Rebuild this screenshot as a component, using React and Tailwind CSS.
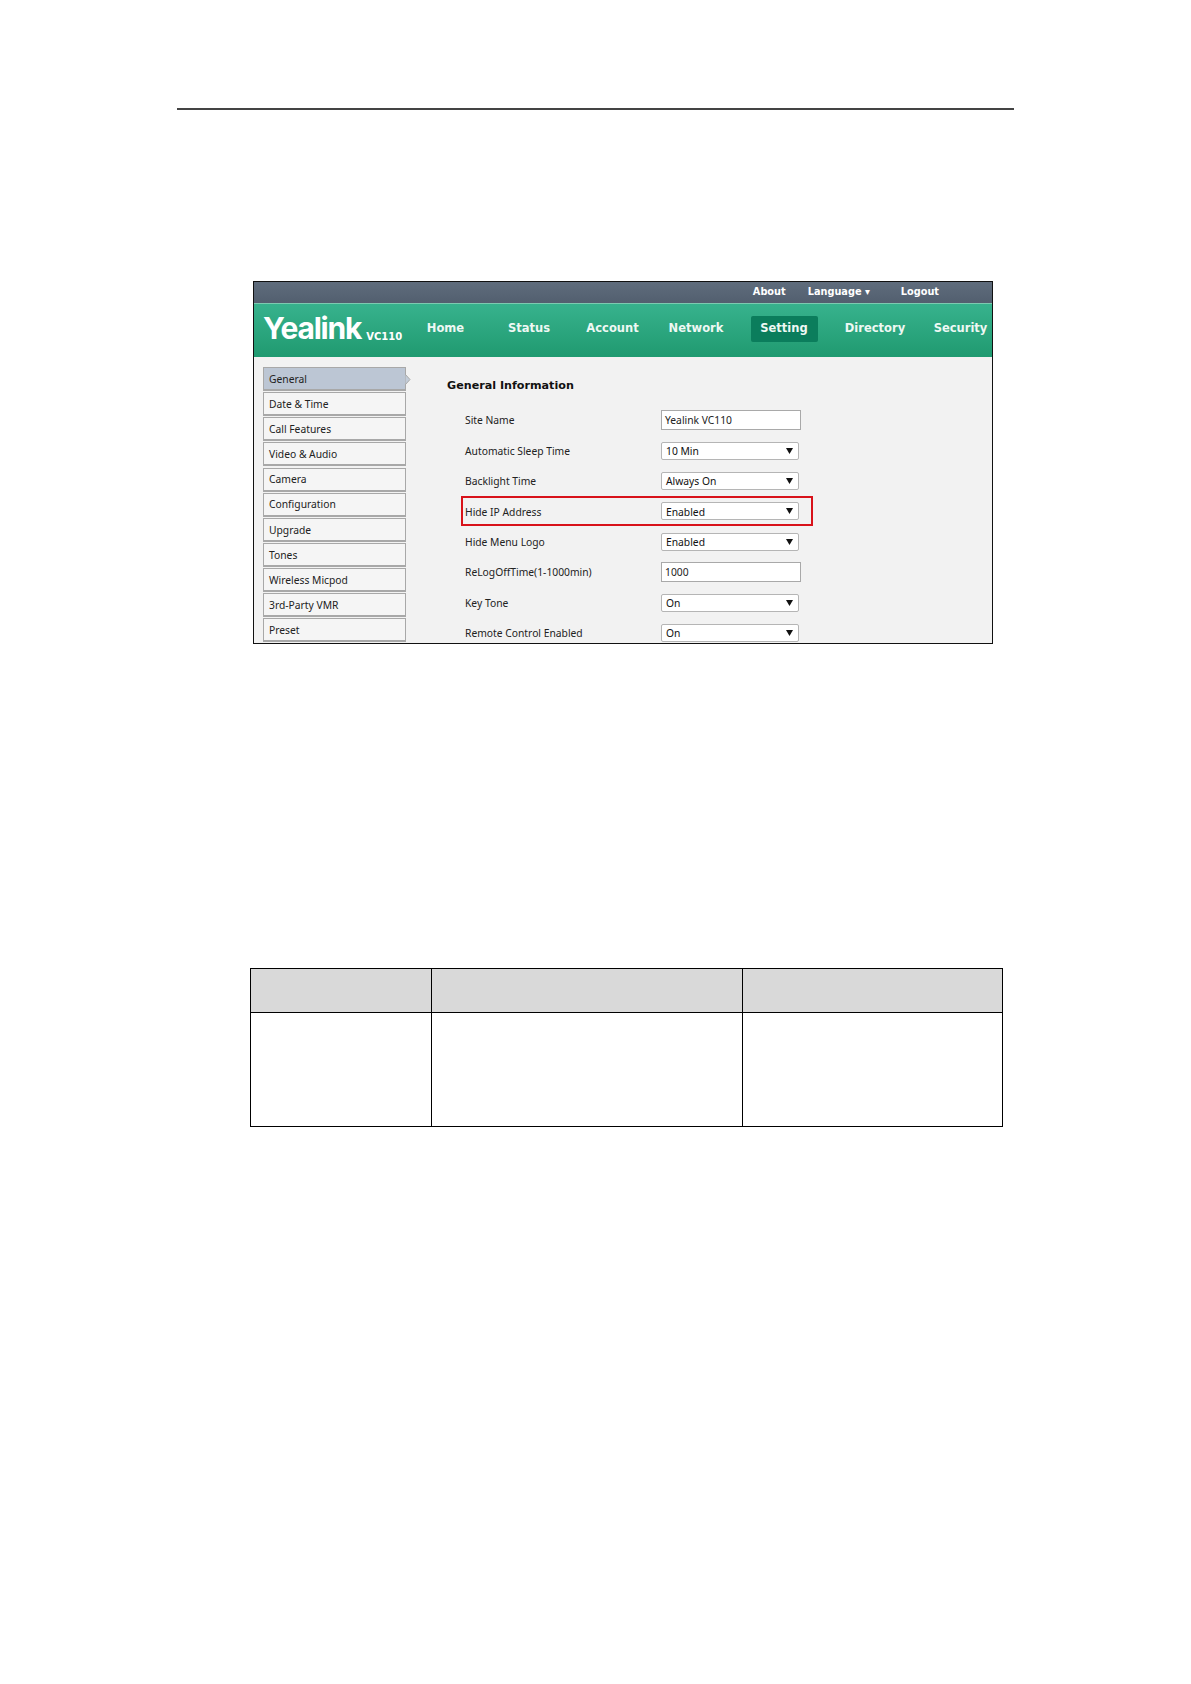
import React from 'react';

const menu = ['General', 'Date & Time', 'Call Features', 'Video & Audio', 'Camera', 'Configuration', 'Upgrade', 'Tones', 'Wireless Micpod', '3rd-Party VMR', 'Preset'];

const rows = [
  { label: 'Site Name', value: 'Yealink VC110', type: 'input' },
  { label: 'Automatic Sleep Time', value: '10 Min', type: 'select' },
  { label: 'Backlight Time', value: 'Always On', type: 'select' },
  { label: 'Hide IP Address', value: 'Enabled', type: 'select', marked: true },
  { label: 'Hide Menu Logo', value: 'Enabled', type: 'select' },
  { label: 'ReLogOffTime(1-1000min)', value: '1000', type: 'input' },
  { label: 'Key Tone', value: 'On', type: 'select' },
  { label: 'Remote Control Enabled', value: 'On', type: 'select' },
];

function NavItem({ width, active, children }) {
  return (
    <div className={`${width} flex justify-center items-center`}>
      <span className={active ? 'w-[67px] h-[26px] flex items-center justify-center rounded-[2px] bg-[#0b7d5c]' : ''}>{children}</span>
    </div>
  );
}

function Field({ row }) {
  if (row.type === 'input') {
    return (
      <div className="w-[140px] h-[20px] bg-white border border-[#a9a9a9] pl-[3px] pt-[2px] flex items-center text-[#222]">{row.value}</div>
    );
  }
  return (
    <div className="w-[138px] h-[18px] bg-white border border-[#b5b5b5] rounded-[2px] pl-[4px] pr-[5px] flex items-center justify-between text-[#111]">
      <span className="pt-[2px]">{row.value}</span>
      <svg width="7" height="6" viewBox="0 0 7 6"><path d="M0 0h7L3.5 6z" fill="#111" /></svg>
    </div>
  );
}

export default function App() {
  return (
    <div className="w-[1191px] h-[1684px] bg-white pt-[108px] font-['DejaVu_Sans',sans-serif]">
      <div className="ml-[177px] w-[837px] h-[2px] bg-[#444]" />

      <div className="ml-[253px] mt-[171px] w-[740px] h-[363px] border border-[#111] flex flex-col overflow-hidden">
        <div className="h-[21px] shrink-0 bg-gradient-to-b from-[#5f6c7c] to-[#525f6f] flex justify-end items-center pr-[53px] text-[9.75px] font-bold text-white">
          <span className="mr-[22px]">About</span>
          <span className="mr-[31px]">Language ▾</span>
          <span>Logout</span>
        </div>
        <div className="h-[54px] shrink-0 pb-[4px] bg-gradient-to-b from-[#37b28d] to-[#1f9a70] border-t border-[#7ccab0] flex items-center text-[11.5px] font-bold text-[#eef8f4]">
          <div className="w-[150px] pl-[9px] flex items-baseline text-white">
            <span className="font-['Inter',sans-serif] font-bold text-[30px] leading-none tracking-[-1.2px] -translate-y-[1px]">Yealink</span>
            <span className="ml-[5px] text-[10px] font-bold">VC110</span>
          </div>
          <NavItem width="w-[83px]">Home</NavItem>
          <NavItem width="w-[84px]">Status</NavItem>
          <NavItem width="w-[83px]">Account</NavItem>
          <NavItem width="w-[84px]">Network</NavItem>
          <NavItem width="w-[92px]" active>Setting</NavItem>
          <NavItem width="w-[90px]">Directory</NavItem>
          <NavItem width="w-[72px] pl-[9px]">Security</NavItem>
        </div>
        <div className="flex-1 bg-[#f2f2f2] flex min-h-0 text-[10.3px] text-[#222] font-['Noto_Sans',sans-serif]">
          <div className="w-[153px] shrink-0 pl-[9px] pt-[10px]">
            {menu.map((item, i) => (
              <div
                key={item}
                className={`relative w-[143px] h-[24px] mb-[1.15px] pl-[5px] pt-[2px] flex items-center border border-[#a8a8a8] border-b-2 ${i === 0 ? 'bg-[#bcc6d4]' : 'bg-[#f5f5f5]'}`}
              >
                {item}
                {i === 0 && (
                  <svg className="absolute -right-[6px] top-[6px]" width="6" height="11" viewBox="0 0 6 11">
                    <path d="M0 0l5 5.5L0 11z" fill="#c3ccd8" stroke="#a8a8a8" />
                  </svg>
                )}
              </div>
            ))}
          </div>
          <div className="flex-1 pl-[40px]">
            <div className="h-[48px] pt-[20px] text-[11.15px] font-bold text-[#111] leading-[18px] font-['DejaVu_Sans',sans-serif]">General Information</div>
            {rows.map((row) => (
              <div key={row.label} className="relative h-[30.4px] flex items-center pl-[18px]">
                {row.marked && <div className="absolute left-[14px] top-0 w-[352px] h-[30px] border-2 border-[#d8121a]" />}
                <div className="w-[196px] pt-[2px]">{row.label}</div>
                <Field row={row} />
              </div>
            ))}
          </div>
        </div>
      </div>

      <div className="ml-[250px] mt-[324px] w-[753px] h-[159px] border border-black grid grid-cols-[181px_311px_1fr] grid-rows-[44px_1fr]">
        <div className="bg-[#d9d9d9] border-r border-b border-black" />
        <div className="bg-[#d9d9d9] border-r border-b border-black" />
        <div className="bg-[#d9d9d9] border-b border-black" />
        <div className="border-r border-black" />
        <div className="border-r border-black" />
        <div />
      </div>
    </div>
  );
}
